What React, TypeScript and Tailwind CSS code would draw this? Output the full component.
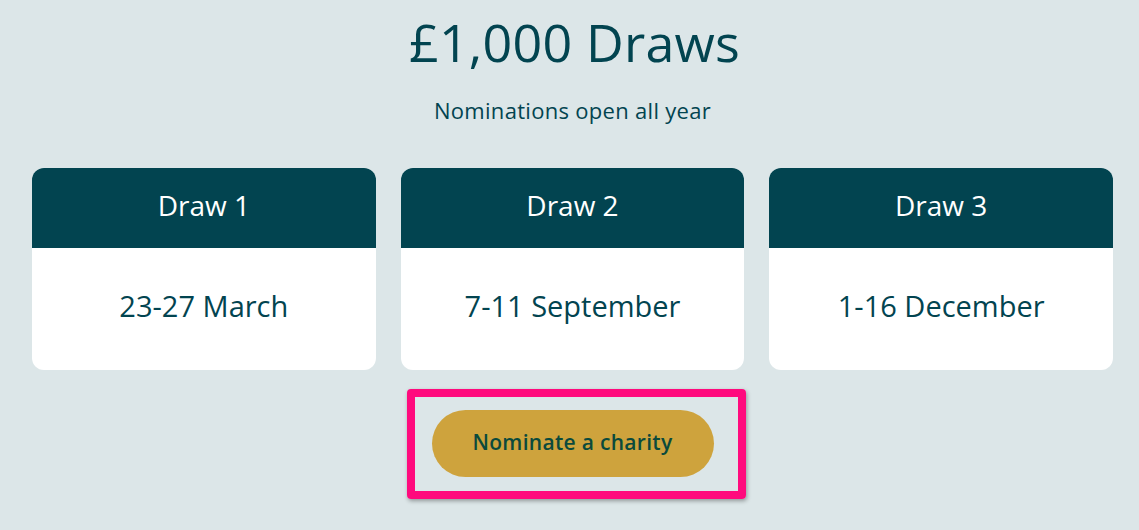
import React from 'react';

const draws = [
  { title: 'Draw 1', dates: '23-27 March' },
  { title: 'Draw 2', dates: '7-11 September' },
  { title: 'Draw 3', dates: '1-16 December' },
];

export default function App() {
  return (
    <div
      className="w-full h-[530px] bg-[#dce6e8] text-[#024450] overflow-hidden"
      style={{ fontFamily: '"Open Sans", "Noto Sans", sans-serif' }}
    >
      <div className="pl-[32px] pr-[26px] flex flex-col items-center">
        <h1 className="mt-[10px] ml-[4px] text-[52px] leading-[64px] font-normal tracking-[0.2px]">£1,000 Draws</h1>
        <p className="mt-[23px] text-[22px] leading-[26px] tracking-[0.3px]">Nominations open all year</p>

        {/* Draw cards */}
        <div className="mt-[45px] w-full grid grid-cols-3 gap-[25px]">
          {draws.map((d) => (
            <div key={d.title} className="rounded-[12px] overflow-hidden bg-white">
              <div className="h-[80px] bg-[#024450] text-white flex items-center justify-center text-[28px] pb-[6px]">
                {d.title}
              </div>
              <div className="h-[122px] flex items-center justify-center text-[29px] pb-[6px]">
                {d.dates}
              </div>
            </div>
          ))}
        </div>

        {/* Highlighted button */}
        <div className="mt-[19px] ml-[7px] w-[339px] h-[110px] border-[8px] border-[#ff0a7d] rounded-[4px] shadow-[1px_2px_4px_rgba(0,0,0,0.35)] pl-[17px] pt-[13px]">
          <button className="w-[282px] h-[67px] rounded-full bg-[#cea33d] text-[#0b4a3c] text-[21px] font-semibold tracking-[0.3px] pb-[2px]">
            Nominate a charity
          </button>
        </div>
      </div>
    </div>
  );
}
